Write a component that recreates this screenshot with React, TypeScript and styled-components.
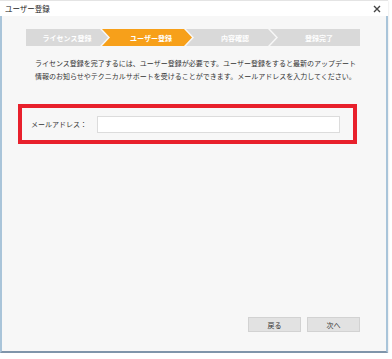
import React, { useState } from 'react';
import styled, { createGlobalStyle } from 'styled-components';

const GlobalStyle = createGlobalStyle`
  html, body {
    margin: 0;
    padding: 0;
    background: #ffffff;
  }
  body {
    font-family: 'Noto Sans CJK JP', 'Noto Sans', sans-serif;
  }
`;

const Window = styled.div`
  width: 388px;
  height: 353px;
  box-sizing: border-box;
  display: flex;
  flex-direction: column;
  background: #f7f7f7;
  border-left: 2px solid #a9c4d9;
  border-right: 2px solid #a9c4d9;
  border-bottom: 2px solid #7f95aa;
  box-shadow: 0 1px 2px rgba(0, 0, 0, 0.15);
`;

const TitleBar = styled.div`
  height: 16px;
  margin: 0 -2px;
  padding: 0 7px 0 5px;
  display: flex;
  align-items: center;
  justify-content: space-between;
  background: #ffffff;
  border-top: 1px solid #e4e4e4;
  box-sizing: border-box;
`;

const Title = styled.span`
  font-size: 7.5px;
  color: #222;
`;

const CloseButton = styled.button`
  width: 8px;
  height: 8px;
  padding: 0;
  border: none;
  background: transparent;
  display: flex;
  cursor: pointer;
`;

const Body = styled.div`
  flex: 1;
  display: flex;
  flex-direction: column;
  padding: 13px 0 0;
`;

const Steps = styled.div`
  display: flex;
  margin-left: 24px;
  width: 334px;
`;

const Step = styled.div<{ $active: boolean; $first: boolean; $last: boolean }>`
  flex: 1;
  height: 17px;
  display: flex;
  align-items: center;
  justify-content: center;
  margin-left: ${p => (p.$first ? '0' : '-6px')};
  padding-left: ${p => (p.$first ? '0' : '8px')};
  background: ${p => (p.$active ? '#f7a01a' : '#d9d9d9')};
  color: #ffffff;
  font-size: 7px;
  font-weight: 700;
  clip-path: ${p =>
    p.$first
      ? 'polygon(0 0, calc(100% - 8px) 0, 100% 50%, calc(100% - 8px) 100%, 0 100%)'
      : p.$last
      ? 'polygon(0 0, 100% 0, 100% 100%, 0 100%, 8px 50%)'
      : 'polygon(0 0, calc(100% - 8px) 0, 100% 50%, calc(100% - 8px) 100%, 0 100%, 8px 50%)'};
`;

const Intro = styled.p`
  margin: 11px 0 0 33px;
  font-size: 7px;
  line-height: 13px;
  color: #333;
`;

const Highlight = styled.div`
  margin: 21px 0 0 16px;
  width: 339px;
  height: 40px;
  box-sizing: border-box;
  border: 4px solid #e8202c;
  display: flex;
  align-items: center;
  padding: 0 13px 0 9px;
  gap: 10px;
`;

const Label = styled.label`
  font-size: 7px;
  color: #333;
  white-space: nowrap;
`;

const EmailInput = styled.input`
  flex: 1;
  height: 17px;
  box-sizing: border-box;
  border: 1px solid #dcdcdc;
  background: #ffffff;
  outline: none;
  font-size: 8px;
  padding: 0 4px;
`;

const Footer = styled.div`
  margin-top: auto;
  display: flex;
  justify-content: flex-end;
  gap: 6px;
  padding: 0 26px 19px 0;
`;

const FooterButton = styled.button`
  width: 53px;
  height: 15px;
  padding: 0;
  border: 1px solid #d2d2d2;
  background: #e2e2e2;
  color: #333;
  font-family: 'Noto Sans CJK JP', 'Noto Sans', sans-serif;
  font-size: 7px;
  cursor: pointer;
`;

const steps = ['ライセンス登録', 'ユーザー登録', '内容確認', '登録完了'];

const App: React.FC = () => {
  const [email, setEmail] = useState('');

  return (
    <>
      <GlobalStyle />
      <Window>
        <TitleBar>
          <Title>ユーザー登録</Title>
          <CloseButton aria-label="close">
            <svg width="8" height="8" viewBox="0 0 8 8">
              <path d="M1 1 L7 7 M7 1 L1 7" stroke="#444" strokeWidth="1.4" />
            </svg>
          </CloseButton>
        </TitleBar>
        <Body>
          <Steps>
            {steps.map((s, i) => (
              <Step key={s} $active={i === 1} $first={i === 0} $last={i === steps.length - 1}>
                {s}
              </Step>
            ))}
          </Steps>
          <Intro>
            ライセンス登録を完了するには、ユーザー登録が必要です。ユーザー登録をすると最新のアップデート
            <br />
            情報のお知らせやテクニカルサポートを受けることができます。メールアドレスを入力してください。
          </Intro>
          <Highlight>
            <Label htmlFor="email">メールアドレス：</Label>
            <EmailInput id="email" value={email} onChange={e => setEmail(e.target.value)} />
          </Highlight>
          <Footer>
            <FooterButton>戻る</FooterButton>
            <FooterButton>次へ</FooterButton>
          </Footer>
        </Body>
      </Window>
    </>
  );
};

export default App;
